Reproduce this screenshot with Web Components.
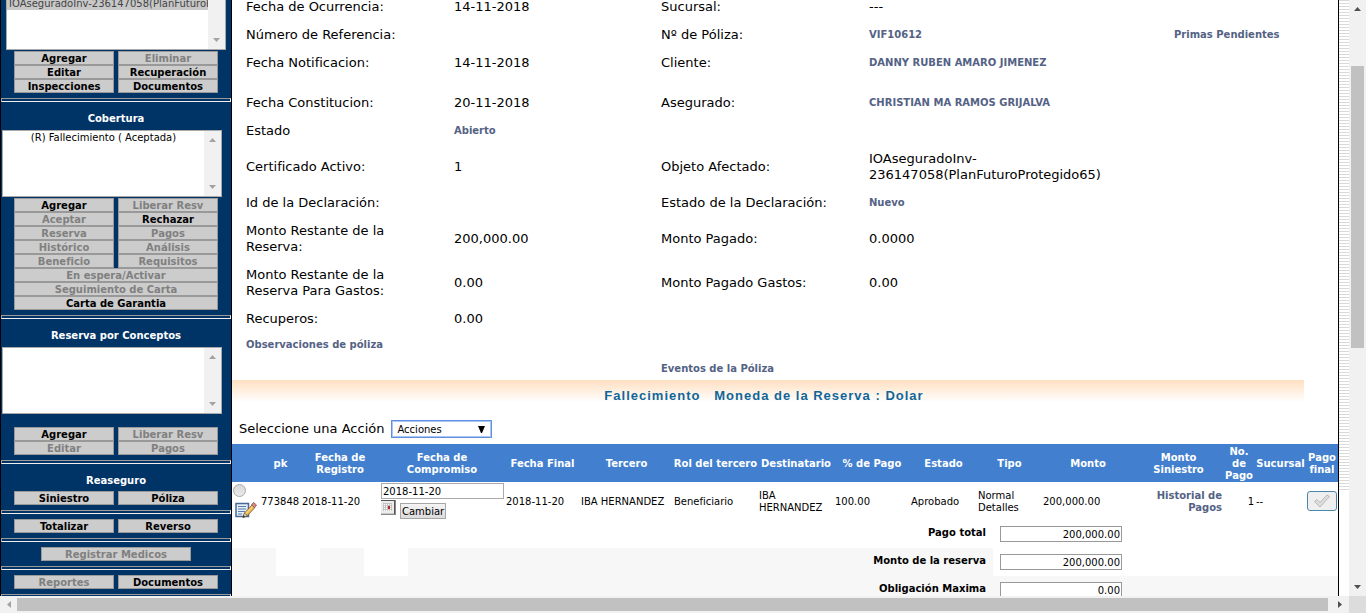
<!DOCTYPE html>
<html lang="es">
<head>
<meta charset="utf-8">
<title>Siniestro</title>
<style>
body { margin: 0; font-family: Verdana, "DejaVu Sans", sans-serif; color: #000; background: #fff; }
</style>
</head>
<body>
<claim-page></claim-page>
<script>
function define(name, html, setup) {
  const template = document.createElement('template');
  template.innerHTML = html;
  customElements.define(name, class extends HTMLElement {
    connectedCallback() {
      if (this.shadowRoot) return;
      const root = this.attachShadow({ mode: 'open' });
      root.append(template.content.cloneNode(true));
      if (setup) setup(this, root);
    }
  });
}

/* Scroll bar: attribute "axis" picks x or y, --before / --after are the free track shares */
define('scroll-bar', `
<style>
:host { display: flex; background: #f1f1f1; box-sizing: border-box; }
:host([axis=y]) { flex-direction: column; width: 17px; padding: 0 2px; }
:host([axis=x]) { height: 17px; padding: 2px 0; }
.arrow { flex: 0 0 17px; display: grid; place-items: center; }
svg { display: block; fill: var(--arrow, #505050); }
.thumb { flex: var(--size, 0); background: #c1c1c1; }
.before { flex: var(--before, 1); }
.after { flex: var(--after, 1); }
:host([axis=y]) .end svg { transform: rotate(180deg); }
:host([axis=x]) .start svg { transform: rotate(-90deg); fill: #a3a3a3; }
:host([axis=x]) .end svg { transform: rotate(90deg); }
</style>
<span class="arrow start"><svg width="7" height="7"><path d="M0 6 3.500 2 7 6z"/></svg></span>
<span class="before"></span><span class="thumb"></span><span class="after"></span>
<span class="arrow end"><svg width="7" height="7"><path d="M0 6 3.500 2 7 6z"/></svg></span>`);

define('side-button', `
<style>
:host { display: block; min-width: 0; }
:host([wide]) { grid-column: 1 / -1; }
:host([mid]) { grid-column: 1 / -1; justify-self: center; width: 150px; }
button { display: block; box-sizing: border-box; width: 100%; height: 14px; padding: 1px 0 0; margin: 0; border: 1px solid #999; border-radius: 0;
  background: #ccc; color: #000; font: bold 10px/12px Verdana, "DejaVu Sans", sans-serif; text-align: center; white-space: nowrap; }
button:disabled { color: #808080; }
</style>
<button type="button"><slot></slot></button>`, (host, root) => {
  root.querySelector('button').disabled = host.hasAttribute('off');
});

define('button-grid', `
<style>
:host { display: grid; grid-template-columns: 1fr 1fr; column-gap: 4px; margin: 0 13px; }
</style>
<slot></slot>`);

define('side-rule', `
<style>
:host { display: block; padding: 5px 0; }
hr { margin: 0; height: 2px; border: 1px solid; border-color: #9a9a9a #eee #eee #9a9a9a; }
</style>
<hr>`);

define('list-box', `
<style>
:host { display: block; margin: 0 9px 0 1px; }
:host([inset]) { margin: 0 5px; }
.box { display: flex; height: 65px; border: 1px solid #a9a9a9; background: #fff; overflow: hidden; }
select { flex: 1; min-width: 0; height: 65px; border: 0; padding: 0; margin: 0; outline: 0; border-radius: 0; background: #fff; overflow: hidden;
  font: 10px/12px Verdana, "DejaVu Sans", sans-serif; color: #000; scrollbar-width: none; }
option { min-height: 0; height: 13px; line-height: 12px; padding: 1px 2px 0; box-sizing: border-box; color: #000; }
option[data-center] { text-align: center; }
option[data-on] { background: #c8c8c8; color: #444; }
scroll-bar { --arrow: #a3a3a3; }
</style>
<div class="box"><select size="5"></select><scroll-bar axis="y"></scroll-bar></div>`, (host, root) => {
  const select = root.querySelector('select');
  select.setAttribute('aria-label', host.getAttribute('label'));
  select.append(...host.querySelectorAll('option'));
});

define('side-panel', `
<style>
:host { display: block; box-sizing: border-box; width: 232px; overflow: hidden; background: #003366; border: 1px solid #000; border-width: 0 1px; }
.inner { margin-top: -17px; }
h2 { margin: 0; padding: 5px 0 3px; font: bold 10px/14px Verdana, "DejaVu Sans", sans-serif; color: #fff; text-align: center; }
h2 + list-box { padding-top: 1px; }
.pad { padding-top: 1px; }
.gap { padding-top: 13px; }
</style>
<div class="inner">
<list-box inset label="Objetos"><option>&nbsp;</option><option data-on>IOAseguradoInv-236147058(PlanFuturoProtegido65)</option></list-box>
<button-grid class="pad">
<side-button>Agregar</side-button><side-button off>Eliminar</side-button>
<side-button>Editar</side-button><side-button>Recuperación</side-button>
<side-button>Inspecciones</side-button><side-button>Documentos</side-button>
</button-grid>
<side-rule></side-rule>
<h2>Cobertura</h2>
<list-box label="Cobertura"><option data-center>(R) Fallecimiento ( Aceptada)</option></list-box>
<button-grid class="pad">
<side-button>Agregar</side-button><side-button off>Liberar Resv</side-button>
<side-button off>Aceptar</side-button><side-button>Rechazar</side-button>
<side-button off>Reserva</side-button><side-button off>Pagos</side-button>
<side-button off>Histórico</side-button><side-button off>Análisis</side-button>
<side-button off>Beneficio</side-button><side-button off>Requisitos</side-button>
<side-button wide off>En espera/Activar</side-button>
<side-button wide off>Seguimiento de Carta</side-button>
<side-button wide>Carta de Garantia</side-button>
</button-grid>
<side-rule></side-rule>
<h2>Reserva por Conceptos</h2>
<list-box label="Reserva por Conceptos"></list-box>
<button-grid class="gap">
<side-button>Agregar</side-button><side-button off>Liberar Resv</side-button>
<side-button off>Editar</side-button><side-button off>Pagos</side-button>
</button-grid>
<side-rule></side-rule>
<h2>Reaseguro</h2>
<button-grid>
<side-button>Siniestro</side-button><side-button>Póliza</side-button>
</button-grid>
<side-rule></side-rule>
<button-grid>
<side-button>Totalizar</side-button><side-button>Reverso</side-button>
</button-grid>
<side-rule></side-rule>
<button-grid><side-button mid off>Registrar Medicos</side-button></button-grid>
<side-rule></side-rule>
<button-grid>
<side-button off>Reportes</side-button><side-button>Documentos</side-button>
</button-grid>
<side-rule></side-rule>
</div>`);

define('claim-details', `
<style>
:host { display: block; margin: -7px 0 0 14px; }
table { width: 100%; table-layout: fixed; border-collapse: collapse; font-size: 13px; line-height: 16px; }
td, th { padding: 0 32px 0 0; height: 28px; vertical-align: middle; text-align: left; font-weight: normal; }
td, .wide { padding-right: 0; }
.after td, .after th { padding-bottom: 12px; }
.tall td, .tall th { height: 44px; }
.low td, .low th { height: 24px; }
.last td, .last th { height: 23px; }
a { font-size: 10px; line-height: 12px; vertical-align: 1px; font-weight: bold; color: #546285; text-decoration: none; white-space: nowrap; }
</style>
<table>
<colgroup><col style="width:208px"><col style="width:207px"><col style="width:208px"><col style="width:305px"><col></colgroup>
<tr><th>Fecha de Ocurrencia:</th><td>14-11-2018</td><th>Sucursal:</th><td>---</td><td></td></tr>
<tr><th>Número de Referencia:</th><td></td><th>Nº de Póliza:</th><td><a href="#">VIF10612</a></td><td><a href="#">Primas Pendientes</a></td></tr>
<tr class="after"><th>Fecha Notificacion:</th><td>14-11-2018</td><th>Cliente:</th><td><a href="#">DANNY RUBEN AMARO JIMENEZ</a></td><td></td></tr>
<tr><th>Fecha Constitucion:</th><td>20-11-2018</td><th>Asegurado:</th><td><a href="#">CHRISTIAN MA RAMOS GRIJALVA</a></td><td></td></tr>
<tr><th>Estado</th><td><a href="#">Abierto</a></td><th></th><td></td><td></td></tr>
<tr class="tall"><th>Certificado Activo:</th><td>1</td><th>Objeto Afectado:</th><td>IOAseguradoInv-<wbr>236147058(PlanFuturoProtegido65)</td><td></td></tr>
<tr><th>Id de la Declaración:</th><td></td><th class="wide">Estado de la Declaración:</th><td><a href="#">Nuevo</a></td><td></td></tr>
<tr class="tall"><th>Monto Restante de la Reserva:</th><td>200,000.00</td><th>Monto Pagado:</th><td>0.0000</td><td></td></tr>
<tr class="tall"><th>Monto Restante de la Reserva Para Gastos:</th><td>0.00</td><th>Monto Pagado Gastos:</th><td>0.00</td><td></td></tr>
<tr><th>Recuperos:</th><td>0.00</td><th></th><td></td><td></td></tr>
<tr class="low"><th><a href="#">Observaciones de póliza</a></th><td></td><td></td><td></td><td></td></tr>
<tr class="last"><th></th><td></td><td><a href="#">Eventos de la Póliza</a></td><td></td><td></td></tr>
</table>`);

define('section-title', `
<style>
:host { display: block; margin-right: 34px; padding: 7px 8px 9px 0; background: linear-gradient(#ffdfc1, #fff) 0 0 / 100% 22px no-repeat; }
h1 { margin: 0; font: bold 13px/18px "Liberation Sans", Arial, sans-serif; letter-spacing: 1px; color: #116699; text-align: center; white-space: pre; }
</style>
<h1><slot></slot></h1>`);

define('action-picker', `
<style>
:host { display: flex; align-items: center; gap: 7px; height: 30px; padding-left: 7px; font-size: 13px; line-height: 16px; }
select { width: 101px; height: 18px; box-sizing: border-box; border: 1px solid #5f8fdd; box-shadow: inset 0 0 0 1px #a9c6f5; border-radius: 0; padding: 1px 5px 0; margin: 0;
  appearance: none; color: #000; font: 10px/14px Verdana, "DejaVu Sans", sans-serif;
  background: #fff url("data:image/svg+xml,%3Csvg xmlns='http://www.w3.org/2000/svg' width='7' height='7'%3E%3Cpath d='M0 0h7L4 7H3z'/%3E%3C/svg%3E") right 6px center no-repeat; }
</style>
<label for="act">Seleccione una Acción</label>
<select id="act"><option>Acciones</option></select>`);

define('payment-table', `
<style>
:host { display: block; font-size: 10px; line-height: 12px; }
table { width: 100%; table-layout: fixed; border-collapse: collapse; }
th { height: 36px; padding: 2px 0 0; background: #4280cf; color: #fff; text-align: center; white-space: nowrap; }
td { height: 36px; padding: 2px 0 0 1px; vertical-align: middle; white-space: nowrap; }
td.control { height: 38px; padding: 0; }
td.num { text-align: right; padding-right: 1px; }
a { font-weight: bold; color: #546285; text-decoration: none; }
.pick { display: flex; flex-direction: column; gap: 5px; align-items: flex-start; }
input[type=radio] { appearance: none; width: 13px; height: 13px; margin: 0 0 0 1px; border: 1px solid #aaa; border-radius: 50%; background: linear-gradient(#d8d8d8, #eaeaea); box-sizing: border-box; }
.edit, .cal, .ok { display: block; padding: 0; border: 0; background: none; }
.edit { margin-left: 3px; }
svg { display: block; }
.date { display: flex; flex-wrap: wrap; align-items: flex-start; column-gap: 4px; padding-left: 2px; }
.date input { width: 123px; height: 16px; box-sizing: border-box; margin: 0; padding: 1px 1px 0; border: 1px solid #aaa; font: 10px/14px Verdana, "DejaVu Sans", sans-serif; color: #000; }
.change { height: 16px; box-sizing: border-box; margin: 4px 0 0; padding: 1px 1px 0; border: 1px solid #a6a6a6; border-radius: 0; background: linear-gradient(#f4f4f4, #dcdcdc); font: 10px/13px Verdana, "DejaVu Sans", sans-serif; color: #000; }
.ok { width: 30px; height: 20px; box-sizing: border-box; margin-left: 1px; border: 1px solid #4a86ae; border-radius: 3px; background: #efefef; display: grid; place-items: center; }
</style>
<table>
<colgroup><col style="width:28px"><col style="width:41px"><col style="width:78px"><col style="width:126px"><col style="width:75px"><col style="width:93px"><col style="width:85px"><col style="width:76px"><col style="width:76px"><col style="width:67px"><col style="width:65px"><col style="width:92px"><col style="width:89px"><col style="width:32px"><col style="width:51px"><col style="width:32px"></colgroup>
<thead><tr><th></th><th>pk</th><th>Fecha de<br>Registro</th><th>Fecha de<br>Compromiso</th><th>Fecha Final</th><th>Tercero</th><th>Rol del tercero</th><th>Destinatario</th><th>% de Pago</th><th>Estado</th><th>Tipo</th><th>Monto</th><th>Monto<br>Siniestro</th><th>No.<br>de<br>Pago</th><th>Sucursal</th><th>Pago<br>final</th></tr></thead>
<tbody><tr>
<td class="control"><div class="pick"><input type="radio" aria-label="Elegir pago 773848">
<button type="button" class="edit" aria-label="Editar"><svg width="22" height="17" viewBox="0 0 22 17"><path d="M1 1.500h12.500v13H1z" fill="#e3edf7" stroke="#4b6a93" stroke-width="1.500"/><path d="M3 4.500h8M3 7h8M3 9.500h7M3 12h4" stroke="#5b7fae" stroke-width="1.200"/><path d="M8 15.500 9.500 11l7.500-8 3 2.500-8 8.500z" fill="#f0b850" stroke="#7a5a30" stroke-width=".8"/><path d="m8 15.500 1.500-4.500 2.700 2.500z" fill="#f3dcb8" stroke="#555" stroke-width=".7"/><path d="m8 15.500.7-2 1.300 1.200z" fill="#111"/><path d="m16.500 3 2-2.500 3 2.500-2 2.500z" fill="#e08c84" stroke="#7e4846" stroke-width=".8"/><path d="m11 11.500 6.500-7" stroke="#fae3a2"/></svg></button></div></td>
<td>773848</td><td>2018-11-20</td>
<td class="control"><div class="date"><input type="text" value="2018-11-20" aria-label="Fecha de Compromiso">
<button type="button" class="cal" aria-label="Calendario"><svg width="15" height="16" viewBox="0 0 15 16"><path d="M0 1h15v15H0z" fill="#8a8a8a"/><path d="M0 2h13v12H0z" fill="#ececec"/><path d="M0 1h14v1H0zM13 2h1v13h-1z" fill="#555"/><path d="M0 14h13v1H0z" fill="#c8c8c8"/><path d="M2 4h9v8H2z" fill="#fff"/><path d="M2 4.500h9M2 6.500h9M2 8.500h9M2 10.500h9M2.500 4v8M4.500 4v8M6.500 4v8M8.500 4v8M10.500 4v8" stroke="#b4b4b4" stroke-width=".7"/><path d="M7 7h2v3H7z" fill="#b22"/></svg></button>
<button type="button" class="change">Cambiar</button></div></td>
<td>2018-11-20</td><td>IBA HERNANDEZ</td><td>Beneficiario</td><td>IBA<br>HERNANDEZ</td><td>100.00</td><td>Aprobado</td><td>Normal<br>Detalles</td><td>200,000.00</td>
<td class="num"><a href="#">Historial de<br>Pagos</a></td><td class="num">1</td><td>--</td>
<td class="control"><button type="button" class="ok" aria-label="Pago final"><svg width="18" height="14" viewBox="0 0 18 14"><path d="m1.500 7.500 2.500-2 3 3 7-7.500 2.500 1.500L7 13z" fill="#dedede" stroke="#b8b8b8"/></svg></button></td>
</tr></tbody>
</table>`);

define('totals-table', `
<style>
:host { display: block; font-size: 10px; line-height: 12px; }
table { width: 100%; table-layout: fixed; border-collapse: collapse; }
th, td { height: 28px; padding: 0; vertical-align: middle; }
th { text-align: right; padding: 0 7px 2px 0; height: 26px; }
td:last-child { padding-left: 7px; }
input { display: block; width: 122px; height: 16px; box-sizing: border-box; margin: 0; padding: 1px 1px 0; border: 1px solid #999; background: #fff; text-align: right; font: 10px/14px Verdana, "DejaVu Sans", sans-serif; color: #000; }
.g, .all { background: #f7f7f7; }
</style>
<table>
<colgroup><col style="width:44px"><col style="width:44px"><col style="width:44px"><col style="width:44px"><col style="width:585px"><col style="width:345px"></colgroup>
<tr><td></td><td></td><td></td><td></td><th><label for="t1">Pago total</label></th><td><input id="t1" value="200,000.00"></td></tr>
<tr><td class="g"></td><td></td><td class="g"></td><td></td><th class="g"><label for="t2">Monto de la reserva</label></th><td><input id="t2" value="200,000.00"></td></tr>
<tr class="all"><td></td><td></td><td></td><td></td><th><label for="t3">Obligación Maxima</label></th><td><input id="t3" value="0.00"></td></tr>
</table>`);

define('claim-page', `
<style>
:host { display: grid; grid-template: minmax(0, 1fr) 17px / minmax(0, 1fr) 17px; height: 100vh; overflow: hidden; }
.view { display: flex; overflow: hidden; }
side-panel { flex: none; }
main { flex: 1; min-width: 0; border-right: 1px solid #000; overflow: hidden; }
.edge { flex: 0 0 10px; }
.edge::before { content: ""; display: block; height: 490px; background: repeating-linear-gradient(#dadada 0 1px, #fff 1px 3px); }
.corner { background: #dcdcdc; }
.v { --before: 49; --size: 282; --after: 231; }
.h { --before: 0; --size: 1311; --after: 4; }
</style>
<div class="view">
<side-panel></side-panel>
<main>
<claim-details></claim-details>
<section-title>Fallecimiento   Moneda de la Reserva : Dolar</section-title>
<action-picker></action-picker>
<payment-table></payment-table>
<totals-table></totals-table>
</main>
<div class="edge"></div>
</div>
<scroll-bar class="v" axis="y"></scroll-bar>
<scroll-bar class="h" axis="x"></scroll-bar>
<div class="corner"></div>`);
</script>
</body>
</html>
